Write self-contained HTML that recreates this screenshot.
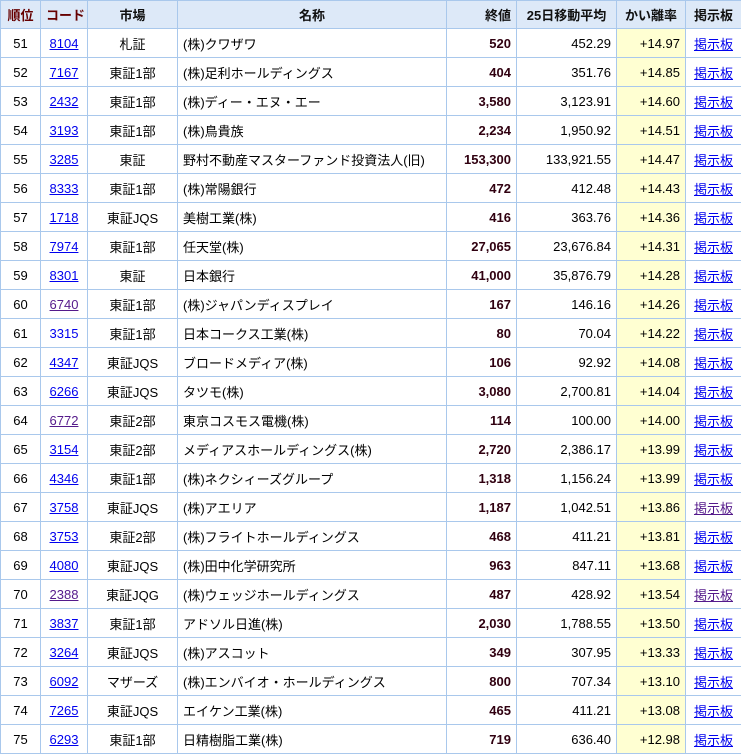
<!DOCTYPE html>
<html><head><meta charset="utf-8"><style>
html,body{margin:0;padding:0;background:#fff;}
table{border-collapse:collapse;table-layout:fixed;width:741px;font-family:"Liberation Sans","Noto Sans CJK JP",sans-serif;font-size:13px;color:#000;}
td,th{border:1px solid #a9c8ec;padding:0 5px;height:28px;white-space:nowrap;overflow:hidden;}
th{background:#dde9f8;height:27px;font-weight:bold;color:#111;}
th.r{color:#660000;}
td.c{text-align:center;}
td.n{text-align:right;}
td.b{text-align:right;font-weight:bold;color:#300010;}
td.k{text-align:right;background:#ffffd2;}
a{color:#0000ee;text-decoration:underline;}
a.v{color:#551a8b;}
a.h{text-decoration:none;}
tr td:first-child{text-align:center;}
</style></head><body>
<table>
<colgroup><col style="width:40px"><col style="width:47px"><col style="width:90px"><col style="width:269px"><col style="width:70px"><col style="width:100px"><col style="width:69px"><col style="width:56px"></colgroup>
<tr><th class="r">順位</th><th class="r">コード</th><th>市場</th><th>名称</th><th style="text-align:right">終値</th><th>25日移動平均</th><th>かい離率</th><th>掲示板</th></tr>
<tr><td>51</td><td class="c"><a>8104</a></td><td class="c">札証</td><td>(株)クワザワ</td><td class="b">520</td><td class="n">452.29</td><td class="k">+14.97</td><td class="c"><a>掲示板</a></td></tr>
<tr><td>52</td><td class="c"><a>7167</a></td><td class="c">東証1部</td><td>(株)足利ホールディングス</td><td class="b">404</td><td class="n">351.76</td><td class="k">+14.85</td><td class="c"><a>掲示板</a></td></tr>
<tr><td>53</td><td class="c"><a>2432</a></td><td class="c">東証1部</td><td>(株)ディー・エヌ・エー</td><td class="b">3,580</td><td class="n">3,123.91</td><td class="k">+14.60</td><td class="c"><a>掲示板</a></td></tr>
<tr><td>54</td><td class="c"><a>3193</a></td><td class="c">東証1部</td><td>(株)鳥貴族</td><td class="b">2,234</td><td class="n">1,950.92</td><td class="k">+14.51</td><td class="c"><a>掲示板</a></td></tr>
<tr><td>55</td><td class="c"><a>3285</a></td><td class="c">東証</td><td>野村不動産マスターファンド投資法人(旧)</td><td class="b">153,300</td><td class="n">133,921.55</td><td class="k">+14.47</td><td class="c"><a>掲示板</a></td></tr>
<tr><td>56</td><td class="c"><a>8333</a></td><td class="c">東証1部</td><td>(株)常陽銀行</td><td class="b">472</td><td class="n">412.48</td><td class="k">+14.43</td><td class="c"><a>掲示板</a></td></tr>
<tr><td>57</td><td class="c"><a>1718</a></td><td class="c">東証JQS</td><td>美樹工業(株)</td><td class="b">416</td><td class="n">363.76</td><td class="k">+14.36</td><td class="c"><a>掲示板</a></td></tr>
<tr><td>58</td><td class="c"><a>7974</a></td><td class="c">東証1部</td><td>任天堂(株)</td><td class="b">27,065</td><td class="n">23,676.84</td><td class="k">+14.31</td><td class="c"><a>掲示板</a></td></tr>
<tr><td>59</td><td class="c"><a>8301</a></td><td class="c">東証</td><td>日本銀行</td><td class="b">41,000</td><td class="n">35,876.79</td><td class="k">+14.28</td><td class="c"><a>掲示板</a></td></tr>
<tr><td>60</td><td class="c"><a class="v">6740</a></td><td class="c">東証1部</td><td>(株)ジャパンディスプレイ</td><td class="b">167</td><td class="n">146.16</td><td class="k">+14.26</td><td class="c"><a>掲示板</a></td></tr>
<tr><td>61</td><td class="c"><a class="h">3315</a></td><td class="c">東証1部</td><td>日本コークス工業(株)</td><td class="b">80</td><td class="n">70.04</td><td class="k">+14.22</td><td class="c"><a>掲示板</a></td></tr>
<tr><td>62</td><td class="c"><a>4347</a></td><td class="c">東証JQS</td><td>ブロードメディア(株)</td><td class="b">106</td><td class="n">92.92</td><td class="k">+14.08</td><td class="c"><a>掲示板</a></td></tr>
<tr><td>63</td><td class="c"><a>6266</a></td><td class="c">東証JQS</td><td>タツモ(株)</td><td class="b">3,080</td><td class="n">2,700.81</td><td class="k">+14.04</td><td class="c"><a>掲示板</a></td></tr>
<tr><td>64</td><td class="c"><a class="v">6772</a></td><td class="c">東証2部</td><td>東京コスモス電機(株)</td><td class="b">114</td><td class="n">100.00</td><td class="k">+14.00</td><td class="c"><a>掲示板</a></td></tr>
<tr><td>65</td><td class="c"><a>3154</a></td><td class="c">東証2部</td><td>メディアスホールディングス(株)</td><td class="b">2,720</td><td class="n">2,386.17</td><td class="k">+13.99</td><td class="c"><a>掲示板</a></td></tr>
<tr><td>66</td><td class="c"><a>4346</a></td><td class="c">東証1部</td><td>(株)ネクシィーズグループ</td><td class="b">1,318</td><td class="n">1,156.24</td><td class="k">+13.99</td><td class="c"><a>掲示板</a></td></tr>
<tr><td>67</td><td class="c"><a>3758</a></td><td class="c">東証JQS</td><td>(株)アエリア</td><td class="b">1,187</td><td class="n">1,042.51</td><td class="k">+13.86</td><td class="c"><a class="v">掲示板</a></td></tr>
<tr><td>68</td><td class="c"><a>3753</a></td><td class="c">東証2部</td><td>(株)フライトホールディングス</td><td class="b">468</td><td class="n">411.21</td><td class="k">+13.81</td><td class="c"><a>掲示板</a></td></tr>
<tr><td>69</td><td class="c"><a>4080</a></td><td class="c">東証JQS</td><td>(株)田中化学研究所</td><td class="b">963</td><td class="n">847.11</td><td class="k">+13.68</td><td class="c"><a>掲示板</a></td></tr>
<tr><td>70</td><td class="c"><a class="v">2388</a></td><td class="c">東証JQG</td><td>(株)ウェッジホールディングス</td><td class="b">487</td><td class="n">428.92</td><td class="k">+13.54</td><td class="c"><a class="v">掲示板</a></td></tr>
<tr><td>71</td><td class="c"><a>3837</a></td><td class="c">東証1部</td><td>アドソル日進(株)</td><td class="b">2,030</td><td class="n">1,788.55</td><td class="k">+13.50</td><td class="c"><a>掲示板</a></td></tr>
<tr><td>72</td><td class="c"><a>3264</a></td><td class="c">東証JQS</td><td>(株)アスコット</td><td class="b">349</td><td class="n">307.95</td><td class="k">+13.33</td><td class="c"><a>掲示板</a></td></tr>
<tr><td>73</td><td class="c"><a>6092</a></td><td class="c">マザーズ</td><td>(株)エンバイオ・ホールディングス</td><td class="b">800</td><td class="n">707.34</td><td class="k">+13.10</td><td class="c"><a>掲示板</a></td></tr>
<tr><td>74</td><td class="c"><a>7265</a></td><td class="c">東証JQS</td><td>エイケン工業(株)</td><td class="b">465</td><td class="n">411.21</td><td class="k">+13.08</td><td class="c"><a>掲示板</a></td></tr>
<tr><td>75</td><td class="c"><a>6293</a></td><td class="c">東証1部</td><td>日精樹脂工業(株)</td><td class="b">719</td><td class="n">636.40</td><td class="k">+12.98</td><td class="c"><a>掲示板</a></td></tr>
</table>
</body></html>
